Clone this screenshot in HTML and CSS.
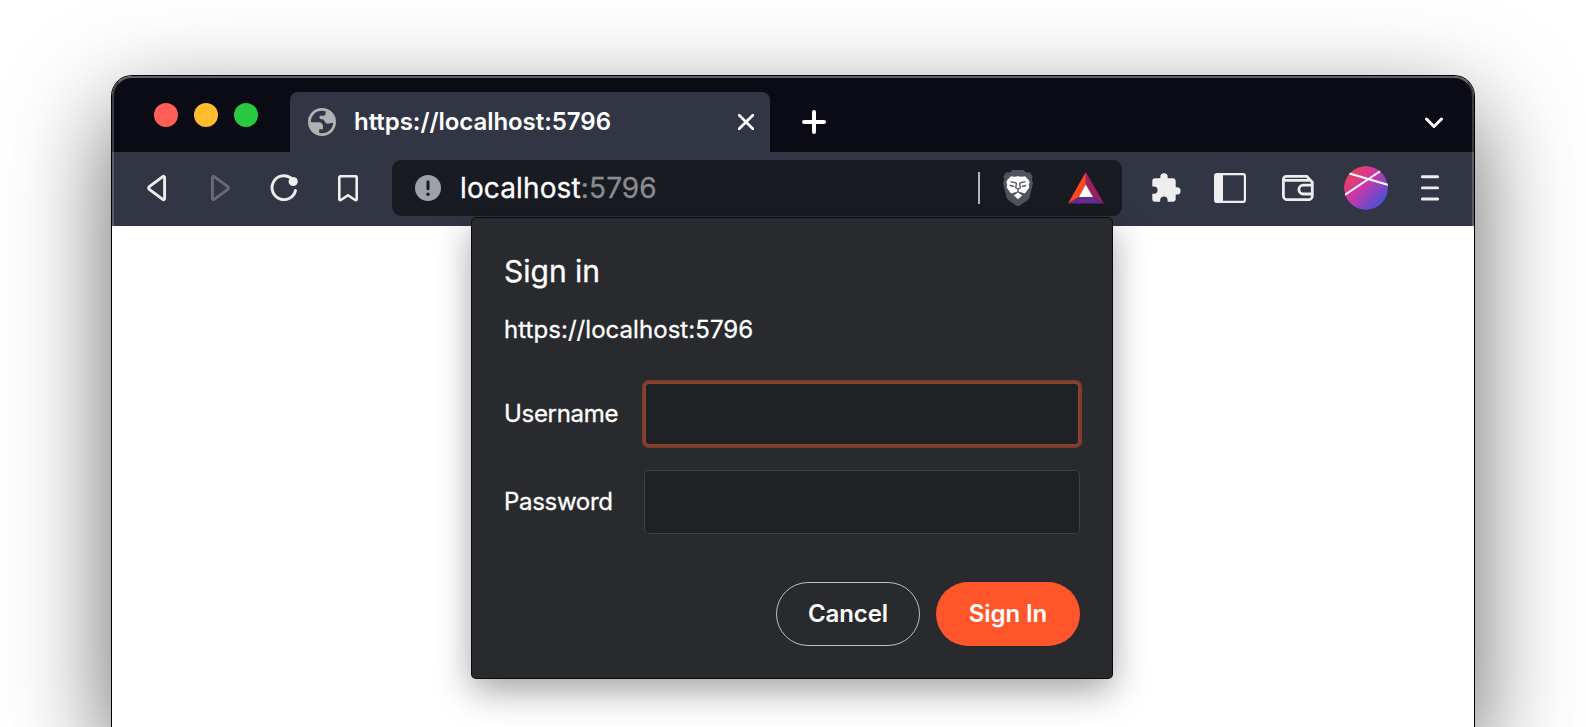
FILE: index.html
```html
<!DOCTYPE html>
<html lang="en">
<head>
<meta charset="utf-8">
<title>Sign in</title>
<link rel="stylesheet" href="styles.css">
</head>
<body>
<div class="scene">
<div class="window">
  <header class="tabstrip">
    <div class="lights"><span class="light red"></span><span class="light amber"></span><span class="light green"></span></div>
    <div class="tab">
      <svg class="globe" width="28" height="28" viewBox="0 0 28 28"><circle cx="14" cy="14" r="14" fill="#b2b2b2"/><circle cx="14" cy="14" r="11.200" fill="#323544"/><path d="M1.500 14.200h9c3.200 0 4.500 1.700 4.500 4.300v2.800h-3.800v4.500L8 25.500 3 20.500zM17.600 2v3.600c0 1.300-.7 2.100-2 2.100h-2.900c-1 0-1.300.4-1.300 1.300 0 1.600 1.200 2.300 2.900 2.300 2 0 2.200 3.500 4.500 4.300 1.700.5 2.600-.7 3.700-.7H26.500L25.500 8z" fill="#b2b2b2"/></svg>
      <span class="tab-title">https://localhost:5796</span>
      <svg class="tab-close" width="16" height="16" viewBox="0 0 16 16"><path d="M1.200 1.200l13.600 13.600M14.800 1.200L1.200 14.800" stroke="#fff" stroke-width="2.700" stroke-linecap="round"/></svg>
    </div>
    <svg class="new-tab" width="24" height="24" viewBox="0 0 24 24"><path d="M12 2v20M2 12h20" stroke="#fff" stroke-width="4" stroke-linecap="round"/></svg>
    <svg class="tab-search" width="20" height="14" viewBox="0 0 20 14"><path d="M2.500 3l7.500 7.500L17.500 3" fill="none" stroke="#fff" stroke-width="3" stroke-linecap="round" stroke-linejoin="round"/></svg>
  </header>
  <nav class="toolbar">
    <svg class="back" width="20" height="28" viewBox="0 0 20 28"><path d="M17.600 3.500v21c0 1-1 1.500-1.800.900L2.300 15.300c-.900-.700-.900-1.900 0-2.600L15.800 2.600c.800-.600 1.800-.100 1.800.900z" fill="none" stroke="#eee" stroke-width="2.900"/></svg>
    <svg class="forward" width="20" height="28" viewBox="0 0 20 28"><path d="M2.400 3.500v21c0 1 1 1.500 1.800.900l13.500-10.100c.900-.700.900-1.900 0-2.600L4.200 2.600c-.800-.600-1.800-.100-1.800.900z" fill="none" stroke="#686b76" stroke-width="2.900"/></svg>
    <svg class="reload" width="28" height="28" viewBox="0 0 28 28"><path d="M20.300 3.600A11.900 11.900 0 1 0 25.500 16.600" fill="none" stroke="#eee" stroke-width="2.900" stroke-linecap="round"/><circle cx="23.200" cy="7.500" r="4.600" fill="#eee"/></svg>
    <svg class="bookmark" width="20" height="27" viewBox="0 0 20 27"><path d="M1.300 24.200V2.300c0-.600.400-1 1-1h15.400c.600 0 1 .400 1 1v21.900c0 .900-.900 1.300-1.600.800L10 20.200 2.900 25c-.700.500-1.600.100-1.600-.800z" fill="none" stroke="#eee" stroke-width="2.600"/></svg>
    <div class="omnibox">
      <svg class="info" width="26" height="26" viewBox="0 0 26 26"><circle cx="13" cy="13" r="13" fill="#9da2a9"/><path d="M13 6.700v7" stroke="#191b22" stroke-width="3" stroke-linecap="round"/><circle cx="13" cy="19.200" r="1.700" fill="#191b22"/></svg>
      <span class="url"><span class="host">localhost</span><span class="port">:5796</span></span>
      <span class="divider"></span>
      <svg class="shield" width="32" height="36" viewBox="0 0 32 36"><path d="M10.500 0h11l2.700 2.600 3.500-.300 3 4.300-1 3.200 1.300 3-3.200 13.500c-.500 2-1.400 3.300-3 4.500l-7 4.600c-1.300.900-2.300.9-3.600 0l-7-4.600c-1.600-1.200-2.500-2.500-3-4.500L1 12.800l1.300-3-1-3.200 3-4.300 3.500.300z" fill="#51535f"/><path d="M9 6.200l3.600.6L16 6.200l3.400.6 3.600-.6 3.500 3.600 1.200 2.400-.9 2.400.5 2.800-3.600 5-1.300 1-3.600-1.200L16 24l-2.800-1.800-3.600 1.200-1.300-1-3.600-5 .5-2.800-.9-2.400 1.200-2.400z" fill="#fff"/><path d="M16 22.400l4.300 2.800L16 29.300l-4.300-4.100z" fill="#fff"/><path d="M8.500 11.600l5.200 1.200c.7.300.8.700.7 1.300l-.8 3.600 2.400 1.300 2.400-1.300-.8-3.600c-.1-.6 0-1 .7-1.300l5.200-1.200M16 19.500v2.200l-4.300 2.400M16 21.700l4.300 2.400" fill="none" stroke="#51535f" stroke-width="1.300"/><path d="M7 14.500l5 1.200.5 1.300-3.500-.3zM25 14.500l-5 1.200-.5 1.300 3.500-.3z" fill="#51535f"/></svg>
      <svg class="bat" width="36" height="32" viewBox="0 0 36 32"><path d="M17.800 0L0 31.500 11.400 25 17.800 12.800z" fill="#ff4724"/><path d="M17.800 0L36 31.500 25 25 17.800 12.800z" fill="#9e1f63"/><path d="M0 31.500L11.400 25H25l11 6.500z" fill="#662d91"/><path d="M17.800 12.600L11 25h14z" fill="#fff"/></svg>
    </div>
    <svg class="puzzle" width="29" height="30" viewBox="0 0 29 30"><path d="M25 14.300h-1.300V8c0-1.500-1.200-2.700-2.700-2.700h-5.300V4a3.700 3.700 0 0 0-7.400 0v1.300H3A2.700 2.700 0 0 0 .300 8v5.400h1.600a3.700 3.700 0 0 1 0 7.400H.300V26A2.700 2.700 0 0 0 3 28.700h5.200v-1.600a3.700 3.700 0 0 1 7.400 0v1.600H21c1.500 0 2.700-1.200 2.700-2.700v-4.500H25a3.600 3.600 0 0 0 0-7.200z" fill="#eee"/></svg>
    <svg class="sidebar" width="32" height="30" viewBox="0 0 32 30"><rect x="1.100" y="1.100" width="29.800" height="27.800" rx="2" fill="none" stroke="#eee" stroke-width="2.200"/><path d="M1 2h8v26H1z" fill="#eee"/></svg>
    <svg class="wallet" width="32" height="26" viewBox="0 0 32 26"><g fill="none" stroke="#eee" stroke-width="2.800"><path d="M30.300 9.500V20.700a4 4 0 0 1-4 4H5.400a4 4 0 0 1-4-4V4.400a3 3 0 0 1 3-3h20.400l5.500 5.800V10M2 5.400h26"/><path d="M30.500 10.200h-9.200a4.400 4.400 0 0 0 0 8.800h9.200"/></g></svg>
    <svg class="avatar" width="44" height="44" viewBox="0 0 44 44"><defs><linearGradient id="av" x1=".12" y1=".15" x2=".86" y2=".86"><stop offset="0" stop-color="#ef4058"/><stop offset=".42" stop-color="#cb37a8"/><stop offset="1" stop-color="#4751da"/></linearGradient><clipPath id="avc"><circle cx="22" cy="22" r="22"/></clipPath></defs><g clip-path="url(#avc)"><circle cx="22" cy="22" r="22" fill="url(#av)"/><path d="M0 29.500L38 4M3 6.700L46 19.500" stroke="#fff" stroke-width="2"/></g></svg>
    <svg class="menu" width="18" height="26" viewBox="0 0 18 26"><path d="M1.400 1.800h15.200M1.400 12.900h15.200M1.400 24h15.200" stroke="#eee" stroke-width="2.900" stroke-linecap="round"/></svg>
  </nav>
  <main class="page"></main>
  <form class="dialog">
    <h1 class="dialog-title">Sign in</h1>
    <p class="origin">https://localhost:5796</p>
    <div class="field"><label class="label" for="user">Username</label><input class="input focused" id="user" type="text"></div>
    <div class="field"><label class="label" for="pass">Password</label><input class="input" id="pass" type="password"></div>
    <div class="actions"><button class="button" type="button">Cancel</button><button class="button primary" type="button">Sign In</button></div>
  </form>
  <div class="rim"></div>
</div>
</div>
</body>
</html>
```
FILE: styles.css
```css
* { box-sizing: border-box; }
body {
  margin: 0;
  background: #fff;
  color: #fff;
  font-family: Inter, "Liberation Sans", sans-serif;
}
svg { display: block; flex: none; }
.scene {
  height: 727px;
  padding: 76px 112px 0;
  overflow: clip;
}
.window {
  position: relative;
  width: 1362px;
  height: 651px;
  border-radius: 20px 20px 0 0;
  background: #fff;
  box-shadow: 0 0 0 1px #000, 0 36px 100px rgba(0, 0, 0, .62);
}
.rim {
  position: absolute;
  inset: 0 0 auto;
  height: 150px;
  border: 2px solid rgba(255, 255, 255, .2);
  border-top-color: rgba(255, 255, 255, .34);
  border-bottom: 0;
  border-radius: 20px 20px 0 0;
  pointer-events: none;
}
.tabstrip {
  display: flex;
  height: 76px;
  padding-left: 42px;
  border-radius: 20px 20px 0 0;
  background: #0b0b16;
}
.lights { display: flex; gap: 16px; width: 136px; padding-top: 27px; }
.light { width: 24px; height: 24px; border-radius: 50%; }
.red { background: #ff5f57; }
.amber { background: #febc2e; }
.green { background: #28c840; }
.tab {
  display: flex;
  align-items: center;
  width: 480px;
  height: 60px;
  margin-top: 16px;
  padding: 0 16px 0 18px;
  border-radius: 8px 8px 0 0;
  background: #323544;
}
.tab-title { flex: 1; margin: -2px 0 0 18px; font-size: 24px; font-weight: 600; letter-spacing: -.05px; white-space: nowrap; }
.new-tab { margin: 34px 0 0 32px; }
.tab-search { margin: 40px 30px 0 auto; }
.toolbar {
  display: flex;
  align-items: center;
  height: 74px;
  padding: 0 35px 2px;
  background: #323544;
}
.forward { margin-left: 43px; }
.reload { margin-left: 40px; }
.bookmark { margin-left: 40px; }
.omnibox {
  display: flex;
  align-items: center;
  width: 730px;
  height: 56px;
  margin-left: 34px;
  padding: 0 18px 0 23px;
  border-radius: 9px;
  background: #191b22;
}
.url { flex: 1; margin-left: 19px; font-size: 28px; letter-spacing: .13px; white-space: nowrap; -webkit-text-stroke: .3px; }
.port { color: #8b8c8f; }
.divider { width: 2px; height: 32px; background: #b5b5b8; }
.shield { margin-left: 22px; }
.bat { margin-left: 34px; }
.puzzle { margin-left: 30px; }
.sidebar { margin-left: 33px; }
.wallet { margin-left: 36px; }
.avatar { margin-left: 30px; }
.menu { margin-left: 33px; }
.dialog {
  position: absolute;
  left: 360px;
  top: 142px;
  width: 640px;
  height: 460px;
  padding: 31px 32px 32px;
  border-radius: 4px;
  background: #292a2e;
  box-shadow: 0 0 0 1px #0b0b0e, 0 12px 36px rgba(0, 0, 0, .38);
}
.dialog-title, .origin, .label { -webkit-text-stroke: .3px; }
.dialog-title { margin: 0; font-size: 30px; line-height: 44px; font-weight: 400; }
.origin { margin: 17px 0 32px; font-size: 24px; line-height: 40px; letter-spacing: .05px; }
.field { display: flex; align-items: center; height: 64px; margin-bottom: 24px; }
.label { width: 140px; padding-bottom: 2px; font-size: 24px; letter-spacing: -.3px; }
.input {
  width: 436px;
  height: 64px;
  border: 1px solid #3e4043;
  border-radius: 5px;
  background: #202124;
  outline: none;
}
.focused { border: 2px solid #884031; box-shadow: 0 0 0 2px #7f3c2e; }
.actions { display: flex; justify-content: flex-end; gap: 16px; margin-top: 48px; }
.button {
  width: 144px;
  height: 64px;
  padding: 0 0 2px;
  border: 1px solid #bdbdcb;
  border-radius: 32px;
  background: transparent;
  color: #fff;
  font: 600 24px Inter, "Liberation Sans", sans-serif;
  letter-spacing: -.1px;
}
.primary { border: 0; background: #fe552b; }
```
